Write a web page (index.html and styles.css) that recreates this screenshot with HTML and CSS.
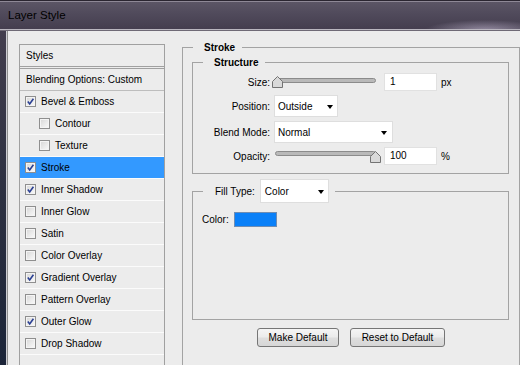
FILE: index.html
```html
<!DOCTYPE html>
<html>

<head>
    <title>Layer Style</title>
    <link rel="stylesheet" href="styles.css">
</head>

<body>
    <div class="window">
        <div class="titlebar">Layer Style</div>
        <div class="window-body">
            <div class="frame"></div>
            <div class="client">

                <div class="styles-list">
                    <div class="styles-head">Styles</div>
                    <div class="styles-blend">Blending Options: Custom</div>
                    <div class="style-row"><span class="cb on"><svg viewBox="0 0 9 9"><path d="M1.8 4.6 L3.7 6.9 L7.4 1.8" /></svg></span>Bevel &amp; Emboss</div>
                    <div class="style-row sub"><span class="cb"></span>Contour</div>
                    <div class="style-row sub"><span class="cb"></span>Texture</div>
                    <div class="style-row selected"><span class="cb on"><svg viewBox="0 0 9 9"><path d="M1.8 4.6 L3.7 6.9 L7.4 1.8" /></svg></span>Stroke</div>
                    <div class="style-row"><span class="cb on"><svg viewBox="0 0 9 9"><path d="M1.8 4.6 L3.7 6.9 L7.4 1.8" /></svg></span>Inner Shadow</div>
                    <div class="style-row"><span class="cb"></span>Inner Glow</div>
                    <div class="style-row"><span class="cb"></span>Satin</div>
                    <div class="style-row"><span class="cb"></span>Color Overlay</div>
                    <div class="style-row"><span class="cb on"><svg viewBox="0 0 9 9"><path d="M1.8 4.6 L3.7 6.9 L7.4 1.8" /></svg></span>Gradient Overlay</div>
                    <div class="style-row"><span class="cb"></span>Pattern Overlay</div>
                    <div class="style-row"><span class="cb on"><svg viewBox="0 0 9 9"><path d="M1.8 4.6 L3.7 6.9 L7.4 1.8" /></svg></span>Outer Glow</div>
                    <div class="style-row"><span class="cb"></span>Drop Shadow</div>
                    <div class="style-row"></div>
                </div>

                <fieldset class="group outer">
                    <legend>Stroke</legend>

                    <fieldset class="group structure">
                        <legend>Structure</legend>
                        <div class="form-grid">
                            <label>Size:</label>
                            <div class="ctl">
                                <svg class="slider" width="110" height="18">
                                    <rect x="3.5" y="5.5" width="100" height="4" rx="2" class="track" />
                                    <polygon points="5.5,3.5 10.5,8.5 10.5,14.5 0.5,14.5 0.5,8.5" class="thumb" />
                                </svg>
                                <div class="num">1</div>
                                <span class="unit">px</span>
                            </div>

                            <label>Position:</label>
                            <div class="ctl">
                                <div class="dropdown w-pos"><span>Outside</span><i class="arrow"></i></div>
                            </div>

                            <label>Blend Mode:</label>
                            <div class="ctl">
                                <div class="dropdown w-blend"><span>Normal</span><i class="arrow"></i></div>
                            </div>

                            <label>Opacity:</label>
                            <div class="ctl">
                                <svg class="slider" width="110" height="18">
                                    <rect x="3.5" y="4.5" width="100" height="4" rx="2" class="track" />
                                    <polygon points="103.5,4.5 108.5,9.5 108.5,15.5 98.5,15.5 98.5,9.5" class="thumb" />
                                </svg>
                                <div class="num">100</div>
                                <span class="unit">%</span>
                            </div>
                        </div>
                    </fieldset>

                    <fieldset class="group fill">
                        <legend>
                            <div class="legend-row">
                                <span>Fill Type:</span>
                                <div class="dropdown w-fill"><span>Color</span><i class="arrow"></i></div>
                            </div>
                        </legend>
                        <div class="fill-body">
                            <span>Color:</span>
                            <span class="swatch"></span>
                        </div>
                    </fieldset>

                    <div class="buttons">
                        <button class="btn w-make">Make Default</button>
                        <button class="btn w-reset">Reset to Default</button>
                    </div>
                </fieldset>

            </div>
        </div>
    </div>
</body>

</html>
```

FILE: styles.css
```css
html,
body {
    margin: 0;
    padding: 0;
    width: 520px;
    height: 365px;
    overflow: hidden;
    background: #ececec;
}

body {
    font-family: "Liberation Sans", Arial, sans-serif;
    font-size: 10px;
    color: #000;
}

.window {
    display: flex;
    flex-direction: column;
    height: 365px;
}

/* title bar */
.titlebar {
    height: 31px;
    box-sizing: border-box;
    padding-left: 8px;
    line-height: 29px;
    font-size: 11.5px;
    color: #000;
    border-top: 1px solid #2a2530;
    border-bottom: 1px solid #6f6a76;
    box-shadow: inset 0 1px 0 #8e8896, inset 0 -1px 0 #bab6bf;
    background:
        radial-gradient(ellipse 60px 10px at 485px 29px, rgba(210, 200, 225, 0.55), rgba(210, 200, 225, 0) 100%),
        linear-gradient(to bottom, #5c5666 0%, #504a5b 45%, #443d4e 100%);
}

.window-body {
    flex: 1;
    display: flex;
    min-height: 0;
}

.frame {
    width: 6px;
    background: linear-gradient(to bottom, #433e4e 0%, #2c3041 50%, #1c2539 100%);
}

.client {
    flex: 1;
    display: flex;
    align-items: flex-start;
    border-left: 1px solid #cfcfd4;
    box-shadow: inset 1px 0 0 #8e8e8e;
    background: #ececec;
}

/* styles list on the left */
.styles-list {
    width: 146px;
    box-sizing: border-box;
    margin: 13px 0 0 12px;
    border: 1px solid #a0a0a0;
    background: #ececec;
}

.styles-head {
    height: 24px;
    box-sizing: border-box;
    line-height: 21px;
    padding-left: 6px;
    border-bottom: 3px double #a0a0a0;
}

.styles-blend {
    height: 22px;
    box-sizing: border-box;
    line-height: 21px;
    padding-left: 6px;
    border-bottom: 1px solid #bdbdbd;
}

.style-row {
    height: 22px;
    box-sizing: border-box;
    display: flex;
    align-items: center;
    gap: 5px;
    padding-left: 5px;
    border-bottom: 1px solid #fbfbfb;
}

.style-row.sub {
    padding-left: 19px;
}

.style-row.selected {
    background: #3399ff;
}

.cb {
    width: 11px;
    height: 11px;
    box-sizing: border-box;
    border: 1px solid #8f8f8f;
    background: linear-gradient(135deg, #d6d6d6 0%, #ececec 60%, #fafafa 100%);
    box-shadow: inset 0 0 0 1px #f4f4f4;
    display: flex;
    align-items: center;
    justify-content: center;
}

.cb svg {
    width: 9px;
    height: 9px;
}

.cb svg path {
    fill: none;
    stroke: #2a3f93;
    stroke-width: 1.6;
}

/* group boxes */
fieldset.group {
    margin: 0;
    padding: 0;
    min-width: 0;
    border: 1px solid #a3a3a3;
    box-sizing: border-box;
}

fieldset.group>legend {
    margin-left: 10px;
    padding: 0 7px 0 11px;
    font-weight: bold;
    line-height: 13px;
}

.outer {
    width: 338px;
    margin: 10px 0 0 17px !important;
    padding-bottom: 40px !important;
}

.structure {
    margin: 2px 10px 0 9px !important;
    padding: 4px 0 8px 0 !important;
}

.fill {
    margin: 5px 10px 0 9px !important;
}

fieldset.fill>legend {
    font-weight: normal;
    padding: 0 6px 0 12px;
}

.legend-row {
    display: flex;
    align-items: center;
    gap: 5px;
}

/* form rows */
.form-grid {
    display: grid;
    grid-template-columns: 77px 1fr;
    column-gap: 4px;
    row-gap: 4px;
    align-items: center;
}

.form-grid label {
    text-align: right;
}

.ctl {
    display: flex;
    align-items: center;
}

.slider {
    display: block;
    margin-left: -2px;
}

.slider .track {
    fill: #b9b9b9;
    stroke: #8b8b8b;
}

.slider .thumb {
    fill: #d9d9d9;
    stroke: #737373;
}

.num {
    width: 53px;
    height: 18px;
    box-sizing: border-box;
    margin-left: 2px;
    padding-left: 5px;
    line-height: 16px;
    background: #fff;
    border: 1px solid #e1e1e1;
}

.unit {
    margin-left: 4px;
}

.dropdown {
    height: 22px;
    box-sizing: border-box;
    display: flex;
    align-items: center;
    justify-content: space-between;
    padding: 0 4px 0 3px;
    background: #fff;
    border: 1px solid #dedede;
}

.w-pos {
    width: 64px;
}

.w-blend {
    width: 119px;
    padding-right: 5px;
}

.w-fill {
    width: 69px;
    height: 24px;
    padding-left: 4px;
}

.arrow {
    width: 0;
    height: 0;
    border-left: 3.5px solid transparent;
    border-right: 3.5px solid transparent;
    border-top: 4px solid #000;
    margin-top: 1px;
}

.fill-body {
    height: 116px;
    box-sizing: border-box;
    padding: 9px 0 0 9px;
    display: flex;
    align-items: flex-start;
    gap: 5px;
    line-height: 15px;
}

.swatch {
    width: 43px;
    height: 15px;
    box-sizing: border-box;
    background: #0a80f8;
    border: 1px solid #6f8db3;
}

/* buttons */
.buttons {
    display: flex;
    justify-content: center;
    gap: 11px;
    margin-top: 8px;
}

.btn {
    height: 19px;
    padding: 0;
    font-family: "Liberation Sans", Arial, sans-serif;
    font-size: 10px;
    color: #000;
    border: 1px solid #767676;
    border-radius: 3px;
    background: linear-gradient(to bottom, #f5f5f5 0%, #ececec 45%, #dedede 55%, #d6d6d6 100%);
}

.w-make {
    width: 82px;
}

.w-reset {
    width: 95px;
}
```
